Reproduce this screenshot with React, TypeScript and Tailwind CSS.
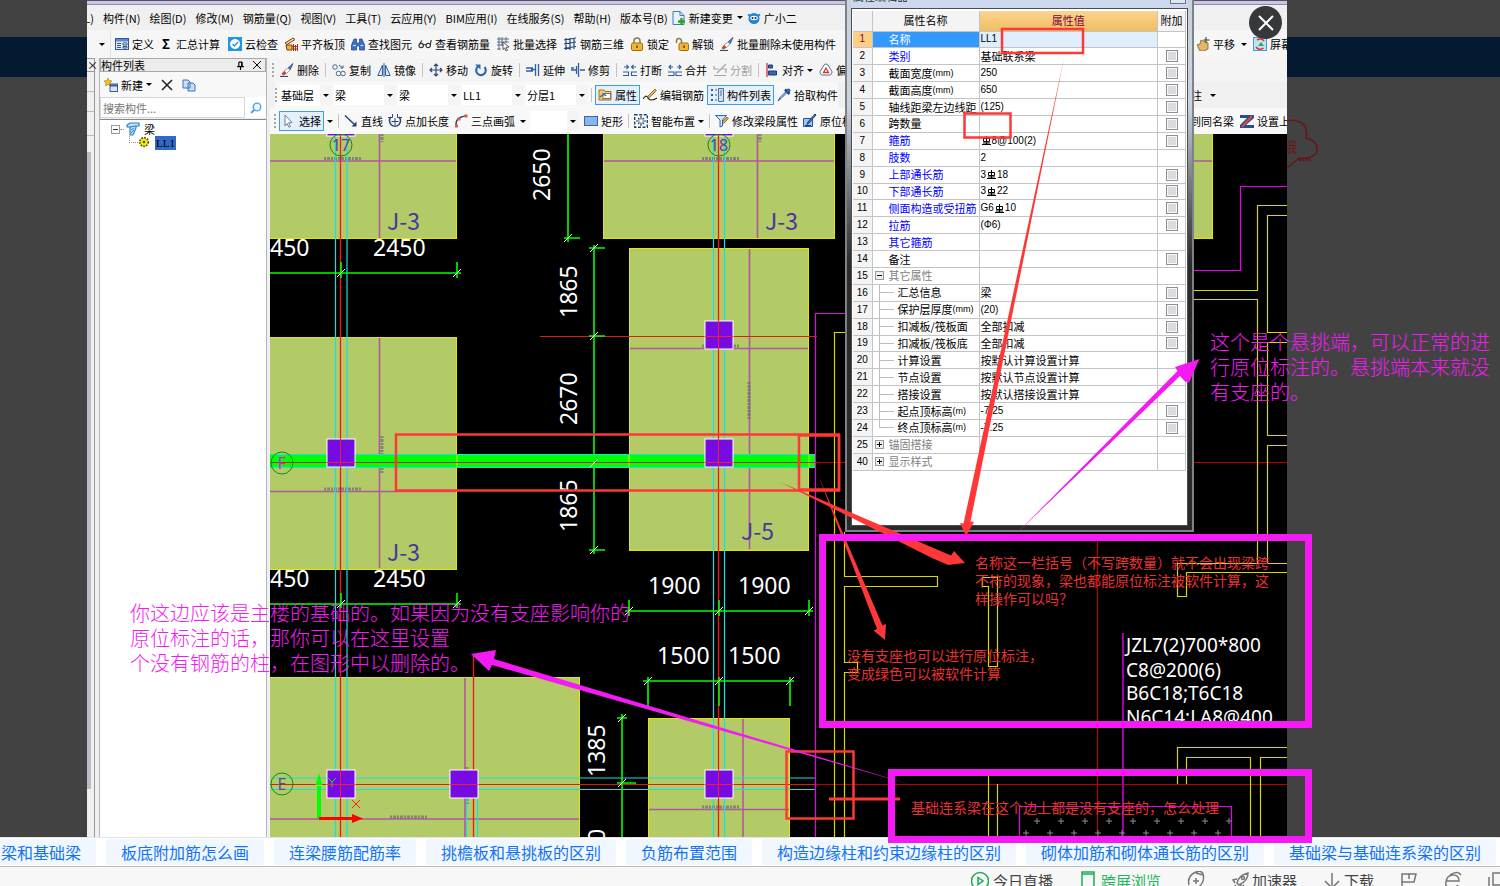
import React, { useState } from 'react';

/* ---------- small 14px toolbar icons ---------- */

const blue = '#2f5f9e';

const icons: Record<string, React.ReactNode> = {
  define: (
    <>
      <rect x="0.5" y="1.5" width="13" height="11" fill="#dfeafa" stroke="#33568c" />
      <rect x="1" y="2" width="12" height="2.5" fill="#5b8bd0" />
      <path d="M2 6.500h4M2 8.500h4M2 10.500h4M8 6h4v2H8zM8 9.500h4v1.500H8z" stroke="#33568c" fill="#fff" />
    </>
  ),
  cloudCheck: (
    <>
      <rect width="14" height="14" fill="#2196e3" />
      <path d="M7 2a5 5 0 1 0 .1 0z" fill="#fff" />
      <path d="M4.500 7l2 2 3.500-4" stroke="#2196e3" strokeWidth="1.400" fill="none" />
    </>
  ),
  alignSlab: (
    <>
      <path d="M1 6l8-5 2 1.500-8 5z" fill="#ffd991" stroke="#7a3f14" />
      <path d="M2 8h6v5H3z" fill="#f0b429" stroke="#7a3f14" />
      <path d="M9.500 7v7M11.500 8v6M13.500 7v7M8 9.500h6M8 12h6" stroke="#a8321c" />
    </>
  ),
  binoculars: (
    <>
      <path d="M3 2h2.500v4h3V2H11l2.500 6v5h-5V9h-3v4h-5V8z" fill="#3f72c4" stroke="#1d3f7d" strokeWidth=".7" />
      <path d="M2 8.500h3M9.500 8.500h3" stroke="#cfe1ff" />
    </>
  ),
  glasses: (
    <path d="M1 8.500a2.200 2.200 0 1 0 4.400 0 2.200 2.200 0 1 0-4.400 0M8 8.500a2.200 2.200 0 1 0 4.400 0 2.200 2.200 0 1 0-4.400 0M5.400 8q1.300-1 2.600 0M1.500 7L4 3.500M12.200 8l1-5" fill="none" stroke="#333" strokeWidth="1.200" />
  ),
  batchSelect: (
    <>
      <path d="M1 2h12M1 5h12M1 8h6M3 0v13M6 0v9M10 0v6M1 12h4" stroke="#5c6f8c" fill="none" />
      <path d="M7 5l6 5-3 .3 1.500 3-1.500.7-1.300-3L7 12.500z" fill="#fff" stroke="#333" strokeWidth=".8" />
    </>
  ),
  rebar3d: <path d="M1 3l12-2M1 7l12-2M1 11.500l12-2M3 1v12M7 1v12M11 1v11" stroke="#24477e" strokeWidth="1.200" fill="none" />,
  lock: (
    <>
      <path d="M4 6.500V4a3 3 0 0 1 6 0v2.500" fill="none" stroke="#8b7a4a" strokeWidth="1.500" />
      <rect x="1.500" y="6" width="11" height="7.500" rx="1.500" fill="#f2b635" stroke="#a06e0e" />
      <path d="M7 8.500v2.500" stroke="#5d3c00" strokeWidth="1.500" />
    </>
  ),
  unlock: (
    <>
      <path d="M1.500 6V4a2.500 2.500 0 0 1 5 0v2.500" fill="none" stroke="#8b7a4a" strokeWidth="1.500" />
      <rect x="4" y="6" width="9.500" height="7.500" rx="1.500" fill="#f2b635" stroke="#a06e0e" />
      <path d="M9 8.500v2.500" stroke="#5d3c00" strokeWidth="1.500" />
    </>
  ),
  brush: (
    <>
      <path d="M13 .5L8 5l2 2z" fill="#4a7fd0" stroke="#264a86" strokeWidth=".8" />
      <path d="M8 5L4 8l2.500 2.500L10 7z" fill="#fff" stroke="#888" strokeWidth=".8" />
      <path d="M4 8l-2.500 3 2 1.500L6.500 10.500z" fill="#d63b2b" />
      <path d="M0 13.500h8" stroke="#2b4a7a" strokeWidth="1.200" />
    </>
  ),
  copy2: (
    <g fill="#eef3fa" stroke="#516c92">
      <circle cx="3" cy="4" r="2.300" />
      <circle cx="6.500" cy="10.500" r="2.300" />
      <circle cx="11" cy="10.500" r="2.300" />
      <path d="M7 2l4 3M11 2.500V5H8.500" fill="none" stroke={blue} />
    </g>
  ),
  mirror: (
    <>
      <path d="M5.500 2v10.500H.8zM8.500 2v10.500h4.700z" fill="#dce8fa" stroke={blue} />
      <path d="M7 0v14" stroke={blue} />
    </>
  ),
  move: <path d="M7 1v12M1 7h12M5 3l2-2 2 2M5 11l2 2 2-2M3 5L1 7l2 2M11 5l2 2-2 2" fill="none" stroke="#2a4778" strokeWidth="1.200" />,
  rotate: (
    <>
      <path d="M4 3.500a4.800 4.800 0 1 0 6.500.5" fill="none" stroke="#2f66b8" strokeWidth="2.200" />
      <path d="M1 1.500h5.500v5z" fill="#2f66b8" />
    </>
  ),
  extend: <path d="M0 5h7M0 8h7M9.500 1v12M12.500 1v12M5 6.500h4" stroke={blue} strokeWidth="1.300" />,
  trim: <path d="M0 7h5M9 7h5M7.500 0v14M5.500 3v8M0 5h3" stroke={blue} strokeWidth="1.300" />,
  breakUp: <path d="M0 9h5.500v3.500H0M14 9H8.500v3.500H14M1 4h4M9 4h4M3.500 2l2 2-2 2M10.500 2l-2 2 2 2" stroke={blue} fill="none" strokeWidth="1.100" />,
  merge: <path d="M0 9h6v3.500H0M14 9H8v3.500h6M1 4h4M9 4h4M3 2L1 4l2 2M11 2l2 2-2 2" stroke={blue} fill="none" strokeWidth="1.100" />,
  split: <path d="M1 3v3h5M1 12.500h12M13 1L4 10M8 6h5v4" stroke="#a5a5a5" fill="none" strokeWidth="1.200" />,
  alignTo: (
    <>
      <path d="M2 0v14" stroke="#c5232b" strokeWidth="1.200" />
      <path d="M3.500 2h4v3h-4zM3.500 8h8v4h-8z" fill="#3467b3" stroke="#1e3f75" />
    </>
  ),
  offset: (
    <>
      <path d="M3 12a3 3 0 0 1-1-5l3-5a2.500 2.500 0 0 1 4 0l3 5a3 3 0 0 1-1 5z" fill="#fff" stroke="#54708f" />
      <path d="M4.500 9.500L7 5l2.500 4.500z" fill="#fff" stroke="#d0372c" strokeWidth="1.300" />
    </>
  ),
  props: (
    <>
      <path d="M1 2h5l1 1.500h6V12H1z" fill="#f9c867" stroke="#a37222" />
      <rect x="5" y="5.500" width="7.500" height="5" fill="#fff" stroke="#777" />
      <path d="M2 9l4-3 2 2" stroke="#3b6bb3" fill="none" strokeWidth="1.500" />
    </>
  ),
  editRebar: (
    <>
      <path d="M0 11q3-5 5-1t9 0" fill="none" stroke="#222" strokeWidth="1.200" />
      <path d="M5 8l7-7 1.500 1.500-7 7L4.500 10z" fill="#e8b04c" stroke="#6b4a14" strokeWidth=".7" />
    </>
  ),
  list: (
    <>
      <path d="M1 1h2v2H1zM1 6h2v2H1zM1 11h2v2H1z" fill={blue} />
      <path d="M5 2h2M5 7h2M5 12h2" stroke={blue} />
      <path d="M8.500.5h5v13h-5z" fill="#cfe0f7" stroke="#54708f" />
      <path d="M10 3h2M10 5h2M10 7h2" stroke="#54708f" />
    </>
  ),
  dropper: (
    <>
      <path d="M8 1.500l4.500 4.500" stroke="#1d4078" strokeWidth="2.500" />
      <path d="M9.500 5L4 10.500 1 13l2-3.500L8.500 4z" fill="#cfe5fb" stroke="#2b5596" />
      <circle cx="11.500" cy="2.500" r="2" fill="#2f66b8" />
    </>
  ),
  cursor: <path d="M3 1l7 7.500-3.500.3 2 3.700-1.500.8-2-3.800L3 12z" fill="#fff" stroke="#6d7f99" />,
  line: (
    <>
      <path d="M1 1.500L11 11" stroke="#1f3f77" strokeWidth="1.400" />
      <path d="M12.500 7.500v5h-5z" fill="#1f3f77" />
    </>
  ),
  pointLen: (
    <>
      <path d="M3 3a5.500 5.500 0 1 0 8 0" fill="none" stroke="#2a4778" strokeWidth="1.500" />
      <path d="M0 3.500h4.500V0M14 3.500H9.500V0" fill="none" stroke="#2a4778" />
      <path d="M7 4v7M3.500 7.500h7" stroke="#2a4778" />
    </>
  ),
  arc3: (
    <>
      <path d="M2 12q-1-9 10-10" fill="none" stroke="#2a4778" strokeWidth="1.300" />
      <path d="M1 10.500h3v3H1zM3.500 3.500h3v3h-3zM10.500.5h3v3h-3z" fill="#e05a48" />
    </>
  ),
  rect: <rect x=".5" y="2.500" width="13" height="9" fill="#8db4ef" stroke="#3665b5" />,
  smart: (
    <>
      <rect x=".7" y=".7" width="12.600" height="12.600" fill="#fff" stroke="#26436f" strokeWidth="1.400" strokeDasharray="3 1.500" />
      <path d="M7 2v3.500M7 8.500V12M2 7h3.500M8.500 7H12M4 4l1.500 1.500M10 4L8.500 5.500M4 10l1.500-1.500M10 10L8.500 8.500" stroke="#26436f" strokeWidth="1.200" />
    </>
  ),
  editSeg: (
    <>
      <path d="M.5 1.500h11l-4 4.500v6l-2.500 1V6z" fill="#cfe5fb" stroke="#2868b8" />
      <path d="M7 8l5-5 1.500 1.500-5 5z" fill="#e9a43c" stroke="#6b4a14" strokeWidth=".7" />
    </>
  ),
  inSitu: (
    <>
      <path d="M.5 4.500h9v8h-9z" fill="#9cc3f2" stroke="#2b5596" />
      <path d="M13 1L6 9l-2 1.500L5 8l7-8z" fill="#4a7fd0" stroke="#1d4078" />
      <path d="M2 11.500h6" stroke="#1d4078" />
    </>
  ),
  pan: (
    <>
      <path d="M1 8l3-1 1-4 2 1 5 2v6l-4 2H4z" fill="#e3b566" stroke="#7c5a1c" strokeWidth=".8" />
      <path d="M10 0v6M7.500 3h6" stroke="#333" />
    </>
  ),
  screenRot: (
    <>
      <rect x=".5" y=".5" width="13" height="13" fill="#bfe3f6" stroke="#4b9bc6" />
      <path d="M5 9l3-4 3 4z" fill="#49a04a" />
      <path d="M4 3a5 5 0 0 1 7 1M10.500 11a5 5 0 0 1-7.500-1" fill="none" stroke="#e0342a" strokeWidth="1.600" />
    </>
  ),
  setTop: (
    <>
      <path d="M0 1h14v3L6 11h8v3H0v-3l7-7H0z" fill="#23508f" />
      <path d="M2 13L12 2" stroke="#e04a3a" strokeWidth="2" />
    </>
  ),
  newChange: (
    <>
      <path d="M1 .5h7l4 4v9H1z" fill="#e8f3ff" stroke="#3f78bd" />
      <path d="M8 .5v4h4" fill="none" stroke="#3f78bd" />
      <path d="M9.500 7v7M6 10.500h7" stroke="#27a32b" strokeWidth="2.400" />
    </>
  ),
  mascot: (
    <>
      <path d="M1 3.500L3.500 5M13 3.500L10.500 5" stroke="#1a84d6" strokeWidth="2" />
      <circle cx="7" cy="7.500" r="5.500" fill="#1a84d6" />
      <ellipse cx="7" cy="7" rx="3.800" ry="2.200" fill="#fff" />
      <circle cx="5.500" cy="7" r="1" fill="#123" />
      <circle cx="8.500" cy="7" r="1" fill="#123" />
    </>
  ),
  newItem: (
    <>
      <path d="M4 0l1 2.500 3 .5-2 2 .5 3L4 6.500 1.500 8 2 5 0 3l3-.5z" fill="#f6c21c" stroke="#a67c00" strokeWidth=".6" />
      <rect x="6" y="6" width="7.500" height="7.500" fill="#d9e7fb" stroke="#2f5f9e" />
      <path d="M6 7.500h7.500" stroke="#2f5f9e" strokeWidth="2" />
    </>
  ),
  copyDoc: <path d="M1 2h5l2 2v6H1zM6 5h5l2 2v6H6z" fill="#c7defa" stroke="#4272b5" />,
  beam: (
    <>
      <path d="M1 3l3-2h9v3h-3v2L7 13H4V5H1z" fill="#bfe0fb" stroke="#2b82c9" strokeWidth="1.200" />
      <path d="M4 5l6-1M5 8l3-2M5 11l3-3" stroke="#2b82c9" />
    </>
  ),
  gear: (
    <>
      <circle cx="7" cy="7" r="5" fill="#f7ec13" stroke="#5d5500" strokeWidth="2" strokeDasharray="2 1.300" />
      <circle cx="7" cy="7" r="1.600" fill="#5d5500" />
    </>
  ),
};

function Icon({ name, size = 'size-[14px]' }: { name: string; size?: string }) {
  return (
    <svg viewBox="0 0 14 14" fill="none" className={`${size} shrink-0`} aria-hidden="true">
      {icons[name]}
    </svg>
  );
}

function Caret() {
  return <span aria-hidden="true" className="h-0 w-0 shrink-0 border-x-[3px] border-t-[3px] border-x-transparent border-t-black" />;
}

function Sep() {
  return <span aria-hidden="true" className="h-[14px] w-px shrink-0 bg-[#c4c4c4]" />;
}

function Grip() {
  return <span aria-hidden="true" className="h-[14px] w-0 shrink-0 border-l-2 border-dotted border-[#a8a8a8]" />;
}

type ToolProps = { icon?: string; label: string; active?: boolean; muted?: boolean; caret?: boolean };

function Tool({ icon, label, active, muted, caret }: ToolProps) {
  return (
    <button
      type="button"
      className={`flex shrink-0 items-center gap-[3px] whitespace-nowrap ${active ? 'h-5 border border-[#3c9cf0] bg-[#e4f0fb] px-[2px]' : ''} ${muted ? 'text-[#a0a0a0]' : 'text-black'}`}
    >
      {icon && <Icon name={icon} />}
      <span>{label}</span>
      {caret && <Caret />}
    </button>
  );
}

function Combo({ label, value, width }: { label: string; value: string; width: string }) {
  return (
    <div className={`relative flex h-5 shrink-0 items-center ${width}`}>
      <select aria-label={label} defaultValue={value} className="h-full w-full appearance-none bg-white pl-px text-[11px] outline-none">
        <option value={value}>{value}</option>
      </select>
      <span className="pointer-events-none absolute right-0 flex h-full w-3 items-center justify-center bg-[#f4f4f4]">
        <Caret />
      </span>
    </div>
  );
}

/* ---------- menu and toolbars ---------- */

const menus = ['构件(N)', '绘图(D)', '修改(M)', '钢筋量(Q)', '视图(V)', '工具(T)', '云应用(Y)', 'BIM应用(I)', '在线服务(S)', '帮助(H)', '版本号(B)'];

function MenuBar() {
  return (
    <nav className="flex h-[25px] items-center gap-1 overflow-hidden bg-[#f0f0f0]">
      <div className="flex shrink-0 items-center gap-[9px]">
        <span className="w-[7px] shrink-0 overflow-hidden">
          <span className="float-right">L)</span>
        </span>
        {menus.map((m) => (
          <button key={m} type="button" className="shrink-0 whitespace-nowrap">
            {m}
          </button>
        ))}
      </div>
      <Tool icon="newChange" label="新建变更" />
      <Caret />
      <Tool icon="mascot" label="广小二" />
    </nav>
  );
}

function MainToolbar() {
  return (
    <div className="flex h-7 items-center overflow-hidden bg-[#f6f6f6]">
      <div className="flex h-full w-6 shrink-0 items-center justify-end border-r border-[#e2e2e2] pr-[5px]">
        <Caret />
      </div>
      <div className="flex flex-1 items-center gap-[6px] overflow-hidden pl-1">
        <Tool icon="define" label="定义" />
        <button type="button" className="flex shrink-0 items-center gap-[6px] px-[2px]">
          <b className="text-[13px]">Σ</b>汇总计算
        </button>
        <Tool icon="cloudCheck" label="云检查" />
        <Tool icon="alignSlab" label="平齐板顶" />
        <Tool icon="binoculars" label="查找图元" />
        <Tool icon="glasses" label="查看钢筋量" />
        <Tool icon="batchSelect" label="批量选择" />
        <Tool icon="rebar3d" label="钢筋三维" />
        <Tool icon="lock" label="锁定" />
        <Tool icon="unlock" label="解锁" />
        <Tool icon="brush" label="批量删除未使用构件" />
      </div>
      <div className="flex w-[91px] shrink-0 items-center gap-[6px] overflow-hidden">
        <Tool icon="pan" label="平移" />
        <Caret />
        <Tool icon="screenRot" label="屏幕" />
      </div>
    </div>
  );
}

function EditToolbar() {
  return (
    <div className="flex h-6 items-center gap-[6px] overflow-hidden bg-[#f4f4f4] pl-[2px]">
      <Grip />
      <Tool icon="brush" label="删除" />
      <Sep />
      <Tool icon="copy2" label="复制" />
      <Tool icon="mirror" label="镜像" />
      <Sep />
      <Tool icon="move" label="移动" />
      <Tool icon="rotate" label="旋转" />
      <Sep />
      <Tool icon="extend" label="延伸" />
      <Tool icon="trim" label="修剪" />
      <Sep />
      <Tool icon="breakUp" label="打断" />
      <Tool icon="merge" label="合并" />
      <Tool icon="split" label="分割" muted />
      <Sep />
      <Tool icon="alignTo" label="对齐" caret />
      <Tool icon="offset" label="偏移" />
    </div>
  );
}

function LayerToolbar() {
  return (
    <div className="flex h-[26px] items-center justify-between overflow-hidden bg-[#f0f0f0] pl-[5px]">
      <div className="flex h-full items-center gap-[3px] bg-[#f8f8f8]">
        <Grip />
        <div className="flex items-center gap-[2px]">
          <Combo label="楼层" value="基础层" width="w-[52px]" />
          <Combo label="构件类型" value="梁" width="w-[62px]" />
          <Combo label="构件种类" value="梁" width="w-[62px]" />
          <Combo label="构件" value="LL1" width="w-[62px]" />
          <Combo label="分层" value="分层1" width="w-[62px]" />
        </div>
        <Sep />
        <Tool icon="props" label="属性" active />
        <Tool icon="editRebar" label="编辑钢筋" />
        <Tool icon="list" label="构件列表" active />
        <Tool icon="dropper" label="拾取构件" />
      </div>
      <div className="flex h-full w-[93px] shrink-0 items-center gap-2">
        <span className="w-2 overflow-hidden">
          <span className="float-right">注</span>
        </span>
        <Caret />
      </div>
    </div>
  );
}

function DrawToolbar() {
  return (
    <div className="flex h-[26px] items-center justify-between overflow-hidden bg-[#f8f8f8] pl-1">
      <div className="flex items-center gap-[5px]">
        <div className="flex items-center gap-[3px]">
          <Grip />
          <Tool icon="cursor" label="选择" active />
          <Caret />
        </div>
        <Sep />
        <Tool icon="line" label="直线" />
        <Tool icon="pointLen" label="点加长度" />
        <Tool icon="arc3" label="三点画弧" />
        <Caret />
        <Combo label="画弧方式" value="" width="w-[48px]" />
        <Tool icon="rect" label="矩形" />
        <Sep />
        <Tool icon="smart" label="智能布置" caret />
        <Sep />
        <Tool icon="editSeg" label="修改梁段属性" />
        <Tool icon="inSitu" label="原位标注" />
      </div>
      <div className="flex w-[94px] shrink-0 items-center gap-[6px] overflow-hidden">
        <span className="w-[41px] shrink-0 overflow-hidden">
          <span className="float-right whitespace-nowrap">到同名梁</span>
        </span>
        <Tool icon="setTop" label="设置上" />
      </div>
    </div>
  );
}

/* ---------- component list panel ---------- */

function ComponentPanel() {
  const [term, setTerm] = useState('');
  return (
    <aside className="flex w-[168px] shrink-0 flex-col border-x border-[#b4b4bc] bg-[#f0f0f0]">
      <header className="flex h-[14px] items-center border border-[#a8a8a8] bg-[#ececec] pr-1">
        <h2 className="flex-1 leading-3">构件列表</h2>
        <svg viewBox="0 0 8 8" className="mr-2 size-[9px]" aria-hidden="true">
          <path d="M2.500 1v4M5.500 1v4M2.500 1h3M1 5h6M4 5v3M5 1v4" stroke="#000" fill="none" />
        </svg>
        <svg viewBox="0 0 8 8" className="size-2" aria-hidden="true">
          <path d="M0 0l8 8M8 0L0 8" stroke="#000" />
        </svg>
      </header>
      <div className="flex h-[25px] items-center gap-[9px] bg-[#f8f8f8] pl-1">
        <Tool icon="newItem" label="新建" caret />
        <button type="button" aria-label="删除">
          <svg viewBox="0 0 12 12" className="size-3">
            <path d="M1 1l10 10M11 1L1 11" stroke="#222" strokeWidth="1.500" />
          </svg>
        </button>
        <button type="button" aria-label="复制">
          <Icon name="copyDoc" />
        </button>
      </div>
      <form className="flex h-[21px] items-center bg-white" onSubmit={(e) => e.preventDefault()}>
        <input
          type="text"
          aria-label="搜索构件"
          value={term}
          onChange={(e) => setTerm(e.target.value)}
          placeholder="搜索构件..."
          className="h-full w-[145px] border border-[#d5d5dd] bg-white px-[2px] outline-none placeholder:text-[#777]"
        />
        <button type="submit" aria-label="搜索" className="flex flex-1 justify-center">
          <svg viewBox="0 0 12 12" className="size-3">
            <circle cx="7" cy="5" r="3.800" fill="#eaf5fd" stroke="#4aa3e0" strokeWidth="1.300" />
            <path d="M4 8L1 11" stroke="#4aa3e0" strokeWidth="1.800" />
          </svg>
        </button>
      </form>
      <div className="mt-px flex-1 border-t border-[#828790] bg-white pt-[2px] pl-[11px]">
        <div className="flex h-[14px] items-center">
          <span className="flex size-[9px] items-center justify-center border border-[#999] bg-white">
            <span className="h-px w-[5px] bg-[#333]" />
          </span>
          <span className="mr-[2px] w-1 border-t border-dotted border-[#999]" />
          <Icon name="beam" />
          <span className="ml-1">梁</span>
        </div>
        <div className="flex h-[14px] items-start pl-[18px]">
          <span className="h-[7px] w-[9px] border-b border-l border-dotted border-[#999]" />
          <Icon name="gear" size="size-3" />
          <button type="button" className="ml-[5px] h-[14px] bg-[#316ac5] px-px font-['Liberation_Serif',serif] leading-[14px]">
            LL1
          </button>
        </div>
      </div>
    </aside>
  );
}

/* ---------- CAD drawing ---------- */

const pads = [
  [260, 120, 197, 118],
  [260, 337, 197, 232],
  [260, 677, 320, 180],
  [603, 120, 232, 118],
  [629, 248, 180, 302],
  [648, 718, 142, 140],
  [1180, 120, 33, 118],
];

const columns = [
  [327, 108],
  [705, 108],
  [327, 439],
  [705, 321],
  [705, 439],
  [327, 770],
  [450, 770],
  [705, 770],
];

const axisBubbles = [
  { x: 341, y: 145, t: '17', c: '#5a3fb0' },
  { x: 719, y: 145, t: '18', c: '#5a3fb0' },
  { x: 282, y: 463, t: 'F', c: '#e815e8' },
  { x: 282, y: 784, t: 'E', c: '#5a4a90' },
];

const horizontalDims = [
  { x: 270, y: 256, t: '450' },
  { x: 373, y: 256, t: '2450' },
  { x: 270, y: 587, t: '450' },
  { x: 373, y: 587, t: '2450' },
  { x: 648, y: 594, t: '1900' },
  { x: 738, y: 594, t: '1900' },
  { x: 657, y: 664, t: '1500' },
  { x: 728, y: 664, t: '1500' },
];

const verticalDims = [
  { x: 550, y: 201, t: '2650' },
  { x: 577, y: 318, t: '1865' },
  { x: 577, y: 425, t: '2670' },
  { x: 577, y: 532, t: '1865' },
  { x: 605, y: 777, t: '1385' },
  { x: 605, y: 842, t: '0' },
];

const ticks = [
  [341, 273], [457, 273], [341, 604], [457, 604], [568, 238], [594, 248], [594, 336], [594, 463], [594, 550],
  [629, 611], [719, 611], [809, 611], [648, 681], [719, 681], [790, 681], [622, 718], [622, 783],
];

const beamNotes = ['JZL7(2)700*800', 'C8@200(6)', 'B6C18;T6C18', 'N6C14;LA8@400'];
const beamNoteY = [652, 677, 700, 724];

function Drawing() {
  return (
    <svg viewBox="270 134 1017 703" className="h-[703px] w-[1017px] shrink-0 font-['Noto_Sans',sans-serif]" role="img" aria-label="基础平面图">
      <defs>
        <pattern id="hatch" width="8" height="8" patternUnits="userSpaceOnUse">
          <rect width="8" height="8" fill="#8000ff" />
          <path d="M0 0l8 8M8 0L0 8" stroke="#5b2d8c" strokeWidth="1" />
        </pattern>
      </defs>
      <rect x="270" y="134" width="1017" height="703" fill="#000" />

      {/* pad footings */}
      {pads.map(([x, y, w, h]) => (
        <rect key={`${x}-${y}`} x={x + 0.5} y={y + 0.5} width={w - 1} height={h} fill="#b2cb67" stroke="#e6e600" strokeWidth="1" />
      ))}
      <path
        d="M270 161H456M379.500 134V238M270 491.500H456M379.500 338V568M270 819H579M465 678V837M604 161H834M757.500 134V238M630 348.500H808M749.500 249V549M649 809.500H789M743 719V837M1190 161H1212"
        stroke="#b455a0"
        strokeWidth="1.600"
        fill="none"
      />
      <path
        d="M324 158.500h37M702 158.500h37M324 489h37M702 346h37M390 817h38M702 807h37M382 436v38M749 382v38M467 767v38M382 134v8M760 134v8"
        stroke="#6b6a78"
        strokeWidth="3"
        strokeDasharray="2 1 3 1"
        opacity=".7"
        fill="none"
      />

      {/* selected beam and axes */}
      <rect x="270" y="455" width="545" height="12" fill="#00ff00" />
      <path d="M457 455v12M629 455v12M809 455v12" stroke="#e6e600" />
      <path d="M335.500 134V837M347 134V837M713.500 134V837M724.500 134V837M270 454.500H815M270 467.500H815M270 778H815M270 789.500H815M466.500 798V837M477.500 798V837" stroke="#18e0e0" strokeWidth="1.200" fill="none" />
      <path d="M340.500 134V837M718.500 134V837M473.500 655V837" stroke="#ff1010" strokeWidth="1.300" fill="none" />
      <path d="M270 462.500H815M540 336.500H817M270 784.500H815" stroke="#d8200c" strokeWidth="1.200" fill="none" />
      <path d="M815 462.500H1287M815 784.500H1287M1097.500 540V837" stroke="#b40000" strokeWidth="1.200" fill="none" />
      {columns.map(([x, y]) => (
        <rect key={`${x}-${y}`} x={x} y={y} width="28" height="28" fill="url(#hatch)" stroke="#fff" strokeWidth="1" />
      ))}
      <path d="M340.500 134V165M340.500 437V469M718.500 134V165M718.500 318V352M718.500 437V469M718.500 768V800M340.500 768V800M327 462.500h28M705 462.500h28M705 336.500h28M327 784.500h28M450 784.500h28M705 784.500h28" stroke="#f0202a" fill="none" />

      {axisBubbles.map((b) => (
        <g key={b.t}>
          <circle cx={b.x} cy={b.y} r="11" fill="none" stroke="#118a11" />
          <text x={b.x} y={b.y + 6} textAnchor="middle" fontSize="16" fill={b.c}>
            {b.t}
          </text>
        </g>
      ))}
      <g fontSize="23" fill="#4b36a0" className="font-['Noto_Sans_CJK_SC',sans-serif]">
        <text x="387" y="230">J-3</text>
        <text x="387" y="561">J-3</text>
        <text x="765" y="230">J-3</text>
        <text x="741" y="540">J-5</text>
      </g>

      {/* dimensions */}
      <path
        d="M270 273H461M341 262V278M457 262V278M270 604H461M341 593V608M457 593V608M568 134V242M564 238H580M594 245V554M589 248H605M589 336H605M589 550H605M625 611H813M629 600V616M719 600V616M809 600V616M643 681H794M648 677V706M719 677V706M790 677V706M622 714V837M617 718H627M617 783H636"
        stroke="#00ff00"
        strokeWidth="1.600"
        fill="none"
      />
      {ticks.map(([x, y]) => (
        <path key={`${x}-${y}`} d={`M${x - 4} ${y + 4}l8 -8`} stroke="#fff" strokeWidth="1" />
      ))}
      <g fontSize="23" fill="#fff">
        {horizontalDims.map((d) => (
          <text key={`${d.x}-${d.y}`} x={d.x} y={d.y}>
            {d.t}
          </text>
        ))}
        {verticalDims.map((d) => (
          <text key={`${d.x}-${d.y}`} transform={`translate(${d.x} ${d.y}) rotate(-90)`}>
            {d.t}
          </text>
        ))}
      </g>

      {/* origin marker */}
      <path d="M319 818V786" stroke="#00ff00" strokeWidth="4" />
      <path d="M315.500 785l3.500-12 3.500 12z" fill="#00ff00" />
      <path d="M319 818.500H352" stroke="#ff0000" strokeWidth="3" />
      <path d="M352 814l11 4.500-11 4.500z" fill="#ff0000" />
      <path d="M352 800l8 8M360 800l-8 8" stroke="#ff2010" />
      <path d="M328 778l4 4 4-4M332 782v5" stroke="#40c040" fill="none" />

      {/* walls */}
      <path
        d="M845 332.500H834.500V837M844.500 532V576.500H937.500V586.500H844.500V662.500H857.500V672.500H844.500V837M982.500 577.500H997.500V666.500H988.500V586.500H982.500zM988.500 776V837M997.500 784V837M1287 205.500H1257.500V290.500H1190M1190 299.500H1257.500V563M1287 215.500H1267.500V332.500H1287M1287 342.500H1267.500V435.500H1287M1287 445.500H1267.500V563M1287 563.500H1177.500V596.500H1186.500V572.500H1287M1287 747.500H1177.500V784M1186.500 784V757.500H1250.500V837M1287 757.500H1260.500V837"
        stroke="#d6d600"
        strokeWidth="1.200"
        fill="none"
      />
      <path d="M845 313.500H815.500V837M1287 186.500H1240.500V270.500H1190M1019.500 837V806.500H1231.500V837" stroke="#e800e8" strokeWidth="1.200" fill="none" />
      <path d="M1123 633V837" stroke="#a000a8" strokeWidth="2" />
      <g stroke="#8c8c8c">
        {Array.from({ length: 9 }, (_, i) => (
          <path key={i} d={`M${1034 + i * 24} 821h6m-3 -3v6M${1023 + i * 24} 833h6m-3 -3v6`} />
        ))}
      </g>
      <g fontSize="19" fill="#fff">
        {beamNotes.map((t, i) => (
          <text key={t} x="1126" y={beamNoteY[i]}>
            {t}
          </text>
        ))}
      </g>
    </svg>
  );
}

/* ---------- property dialog ---------- */

type Row = { no: number; name: string; value?: string; kind?: 'link' | 'group' | 'child' | 'last'; check?: boolean; open?: boolean };

const rows: Row[] = [
  { no: 1, name: '名称', value: 'LL1' },
  { no: 2, name: '类别', value: '基础联系梁', kind: 'link', check: true },
  { no: 3, name: '截面宽度(mm)', value: '250', check: true },
  { no: 4, name: '截面高度(mm)', value: '650', check: true },
  { no: 5, name: '轴线距梁左边线距', value: '(125)', check: true },
  { no: 6, name: '跨数量', check: true },
  { no: 7, name: '箍筋', value: '#8@100(2)', kind: 'link', check: true },
  { no: 8, name: '肢数', value: '2', kind: 'link' },
  { no: 9, name: '上部通长筋', value: '3#18', kind: 'link', check: true },
  { no: 10, name: '下部通长筋', value: '3#22', kind: 'link', check: true },
  { no: 11, name: '侧面构造或受扭筋', value: 'G6#10', kind: 'link', check: true },
  { no: 12, name: '拉筋', value: '(Φ6)', kind: 'link', check: true },
  { no: 13, name: '其它箍筋', kind: 'link' },
  { no: 14, name: '备注', check: true },
  { no: 15, name: '其它属性', kind: 'group', open: true },
  { no: 16, name: '汇总信息', value: '梁', kind: 'child', check: true },
  { no: 17, name: '保护层厚度(mm)', value: '(20)', kind: 'child', check: true },
  { no: 18, name: '扣减板/筏板面', value: '全部扣减', kind: 'child', check: true },
  { no: 19, name: '扣减板/筏板底', value: '全部扣减', kind: 'child', check: true },
  { no: 20, name: '计算设置', value: '按默认计算设置计算', kind: 'child' },
  { no: 21, name: '节点设置', value: '按默认节点设置计算', kind: 'child' },
  { no: 22, name: '搭接设置', value: '按默认搭接设置计算', kind: 'child' },
  { no: 23, name: '起点顶标高(m)', value: '-7.25', kind: 'child', check: true },
  { no: 24, name: '终点顶标高(m)', value: '-7.25', kind: 'last', check: true },
  { no: 25, name: '锚固搭接', kind: 'group' },
  { no: 40, name: '显示样式', kind: 'group' },
];

// "#" stands for the rebar grade mark
function RebarValue({ text }: { text: string }) {
  const parts = text.split('#');
  return (
    <span className="flex items-center">
      {parts.map((p, i) => (
        <React.Fragment key={i}>
          {i > 0 && (
            <svg viewBox="0 0 9 9" className="mx-px size-[9px]" aria-label="三级钢">
              <path d="M4.500 0v9M1.500 2.500h6v3h-6zM0 8.500h9M1 7h7" stroke="#000" fill="none" />
            </svg>
          )}
          {p}
        </React.Fragment>
      ))}
    </span>
  );
}

function splitUnit(name: string) {
  const at = name.indexOf('(');
  return at < 0 ? [name, ''] : [name.slice(0, at), name.slice(at)];
}

function NameCell({ row }: { row: Row }) {
  const [label, unit] = splitUnit(row.name);
  const child = row.kind === 'child' || row.kind === 'last';
  return (
    <div className="flex h-[15px] items-center">
      <span className={`flex shrink-0 items-center ${child ? 'w-[25px]' : 'w-[16px]'} pl-[2px]`}>
        {row.kind === 'group' && (
          <button type="button" aria-label={row.open ? '折叠' : '展开'} className="relative size-[9px] border border-[#999] bg-[#eee]">
            <span className="absolute top-[3px] left-px h-px w-[5px] bg-black" />
            {!row.open && <span className="absolute top-px left-[3px] h-[5px] w-px bg-black" />}
          </button>
        )}
        {child && (
          <svg viewBox="0 0 20 17" className="h-[17px] w-5" aria-hidden="true">
            <path d={row.kind === 'last' ? 'M4.500 0V8.500H19' : 'M4.500 0V17M4.500 8.500H19'} stroke="#bdbdbd" fill="none" />
          </svg>
        )}
      </span>
      <span className="whitespace-nowrap">{label}</span>
      {unit && <span className="font-['Liberation_Sans',sans-serif] text-[9px]">{unit}</span>}
    </div>
  );
}

function PropertyDialog() {
  return (
    <section
      aria-label="属性编辑器"
      className="absolute top-0 left-[845px] flex h-[532px] w-[349px] flex-col border-x-2 border-b-2 border-[#7c8286] bg-linear-to-b from-[#c9d3de] from-20% to-[#2a2a2a] to-50% px-1 pb-1"
    >
      <div className="flex h-2 shrink-0 items-start justify-between overflow-hidden bg-[#cdd8ee] px-[2px]">
        <h2 className="-mt-3 text-[11px] leading-4 text-[#333]">属性编辑器</h2>
        <button type="button" aria-label="关闭属性编辑器" className="-mt-2 h-3 w-4 border border-[#6c7688] bg-[#dde5f0]" />
      </div>
      <div className="flex-1 overflow-hidden border border-[#4c4c4c] bg-white px-px pt-[2px]">
        <table className="h-[460px] w-full table-fixed border-collapse text-left text-[11px] leading-[15px]">
          <colgroup>
            <col className="w-[19px]" />
            <col className="w-[107px]" />
            <col />
            <col className="w-[28px]" />
          </colgroup>
          <thead>
            <tr className="h-5">
              <th className="border border-t-0 border-l-0 border-[#c4c4c4] bg-[#f2f2f2]" aria-label="序号" />
              <th className="border border-t-0 border-[#c4c4c4] bg-[#f4f4f4] p-0 text-center font-normal">属性名称</th>
              <th className="border border-t-0 border-[#c4c4c4] bg-linear-to-b from-[#fbd490] to-[#f0bd60] p-0 text-center font-normal text-[#800040]">属性值</th>
              <th className="border border-t-0 border-[#c4c4c4] bg-[#f4f4f4] p-0 text-center font-normal whitespace-nowrap">附加</th>
            </tr>
          </thead>
          <tbody>
            {rows.map((r) => {
              const sel = r.no === 1;
              const cjk = !!r.value && /[\u4e00-\u9fff]/.test(r.value);
              const tone = sel ? 'bg-[#3399ff] text-white' : r.kind === 'link' ? 'text-[#0000ff]' : r.kind === 'group' ? 'text-[#808080]' : 'text-black';
              return (
                <tr key={r.no}>
                  <td className={`border border-l-0 border-[#c4c4c4] p-0 text-center font-['Liberation_Sans',sans-serif] text-[10px] leading-3 ${sel ? 'bg-[#fdcf84] text-[#800040]' : 'bg-[#f4f4f4]'}`}>
                    {r.no}
                  </td>
                  <td className={`border border-[#c4c4c4] p-0 ${tone}`}>
                    <NameCell row={r} />
                  </td>
                  <td className={`border border-[#c4c4c4] py-0 pr-0 pl-px whitespace-nowrap ${sel ? 'bg-[#deeefd]' : ''} ${cjk ? '' : "font-['Liberation_Sans',sans-serif] text-[10px] leading-3"}`}>
                    {r.value && <RebarValue text={r.value} />}
                  </td>
                  <td className="border border-[#c4c4c4] p-0">
                    {r.check && (
                      <input
                        type="checkbox"
                        aria-label={`附加 ${r.name}`}
                        className="mx-auto block size-3 appearance-none border border-[#8e8f8f] bg-[#d8dbe0] outline-1 -outline-offset-2 outline-[#f8f8f8] checked:bg-[#3399ff]"
                      />
                    )}
                  </td>
                </tr>
              );
            })}
          </tbody>
        </table>
      </div>
    </section>
  );
}

/* ---------- markup drawn over the screenshot ---------- */

function Markup() {
  return (
    <div className="pointer-events-none absolute inset-0">
      <div className="absolute top-[553px] left-[975px] text-sm leading-[18px] whitespace-nowrap text-[#e83232]">
        <p>名称这一栏括号（不写跨数量）就不会出现梁跨</p>
        <p>不符的现象，梁也都能原位标注被软件计算，这</p>
        <p>样操作可以吗？</p>
      </div>
      <div className="absolute top-[646px] left-[847px] text-sm leading-[18px] whitespace-nowrap text-[#e83232]">
        <p>没有支座也可以进行原位标注，</p>
        <p>变成绿色可以被软件计算</p>
      </div>
      <p className="absolute top-[798px] left-[911px] text-sm leading-[18px] whitespace-nowrap text-[#e83232]">
        基础连系梁在这个边上都是没有支座的，怎么处理
      </p>
      <div className="absolute top-[600px] left-[130px] text-xl leading-[25px] font-light whitespace-nowrap text-[#f31af3]">
        <p>你这边应该是主楼的基础的。如果因为没有支座影响你的</p>
        <p>原位标注的话，那你可以在这里设置</p>
        <p>个没有钢筋的柱，在图形中以删除的。</p>
      </div>
      <div className="absolute top-[329px] left-[1210px] text-xl leading-[25px] font-light whitespace-nowrap text-[#f31af3]">
        <p>这个是个悬挑端，可以正常的进</p>
        <p>行原位标注的。悬挑端本来就没</p>
        <p>有支座的。</p>
      </div>
      <svg viewBox="0 0 1500 886" className="absolute top-0 left-0 h-[886px] w-[1500px]" aria-hidden="true">
        <g fill="none" stroke="#ff3737" strokeWidth="2.500">
          <rect x="1002" y="29" width="81" height="24" />
          <rect x="964.500" y="113.500" width="46" height="24" />
          <rect x="396" y="434.500" width="443" height="56" />
          <rect x="799" y="435.500" width="40" height="54" />
          <rect x="786.500" y="751.500" width="67" height="67" />
          <path d="M829 799H900" strokeWidth="3" />
        </g>
        <g fill="#ff3737">
          <path d="M1064.500 56L963.500 523.500l-3.500-.5 6 13 8-14-3.500-.5z" />
          <path d="M780 482l152 76 16 7 17-2-11-12-3 4.500z" />
          <path d="M818.500 476l58.500 153-3.500 1.500L885 640l1-16-3.500 1.500z" />
        </g>
        <g fill="#f31af3">
          <path d="M1015 535L1180 376l5 5.500 4 1 10.500-23.500-24.500 8 2.500 4z" />
          <path d="M912 785L494 659l2-9-25 4 18 17 3-6z" />
        </g>
        <g fill="none" stroke="#f31af3" strokeWidth="7">
          <rect x="822.500" y="537.500" width="486" height="187" />
          <rect x="891.500" y="772.500" width="417" height="67" />
        </g>
      </svg>
    </div>
  );
}

/* ---------- bottom bars ---------- */

const related = ['板底附加筋怎么画', '连梁腰筋配筋率', '挑檐板和悬挑板的区别', '负筋布置范围', '构造边缘柱和约束边缘柱的区别', '砌体加筋和砌体通长筋的区别', '基础梁与基础连系梁的区别'];

function RelatedLinks() {
  return (
    <nav className="flex h-[30px] items-center gap-[10px] overflow-hidden border-t border-b border-t-[#e4e4e4] border-b-[#bdbdbd] bg-white text-base text-[#1273f5]">
      <a href="#0" className="shrink-0 bg-[#f0f7ff] pr-[15px] pl-px leading-[26px]">
        梁和基础梁
      </a>
      {related.map((t, i) => (
        <a key={t} href={`#${i + 1}`} className="shrink-0 rounded-sm bg-[#f0f7ff] px-[15px] leading-[26px]">
          {t}
        </a>
      ))}
    </nav>
  );
}

function StatusIcon({ children, color = 'text-[#777]' }: { children: React.ReactNode; color?: string }) {
  return (
    <svg viewBox="0 0 18 20" fill="none" stroke="currentColor" strokeWidth="1.500" className={`h-5 w-[18px] shrink-0 ${color}`} aria-hidden="true">
      {children}
    </svg>
  );
}

function StatusBar() {
  return (
    <footer className="h-[19px] overflow-hidden bg-[#f7f7f7] text-[15px] text-[#444]">
      <div className="flex h-7 items-center justify-end gap-[26px] whitespace-nowrap">
        <button type="button" className="flex items-center gap-1">
          <StatusIcon color="text-[#1aad5a]">
            <circle cx="9" cy="10" r="8.500" />
            <path d="M7 6.500l5 3.500-5 3.500z" />
          </StatusIcon>
          今日直播
        </button>
        <button type="button" className="flex items-center gap-1 text-[#1fb65f]">
          <StatusIcon color="text-[#1aad5a]">
            <path d="M3 1h12v18H3zM3 3h12" />
          </StatusIcon>
          跨屏浏览
        </button>
        <button type="button" aria-label="鼠标手势">
          <StatusIcon>
            <path d="M2 14q-2-8 5-12t9 1q2 7-3 12t-10 2M9 7v6M6 10h6M9 2l7 2" />
          </StatusIcon>
        </button>
        <button type="button" className="flex items-center gap-[3px]">
          <StatusIcon>
            <path d="M6 12q2-8 11-10 0 8-9 12zM6 8L2 9l2 3M10 13l-1 4 4-3M5 14l-3 3" />
            <circle cx="12" cy="7" r="1.500" />
          </StatusIcon>
          加速器
        </button>
        <button type="button" className="flex items-center gap-[3px]">
          <StatusIcon>
            <path d="M9 2v15M2 10l7 7 7-7" />
          </StatusIcon>
          下载
        </button>
        <button type="button" aria-label="标记">
          <StatusIcon>
            <path d="M2 18V3h14l-2 8H2M9 3v5" />
          </StatusIcon>
        </button>
        <button type="button" aria-label="浏览器模式">
          <StatusIcon>
            <path d="M2 10h13q0-6-6-6t-7 7 6 6q4 0 6-3M6 4q8-5 11 0" />
          </StatusIcon>
        </button>
        <button type="button" aria-label="窗口" className="-mr-[6px]">
          <StatusIcon>
            <path d="M5 2h12v12H5zM1 6v12h12" />
          </StatusIcon>
        </button>
      </div>
    </footer>
  );
}

export default function App() {
  const [open, setOpen] = useState(true);

  return (
    <div className="relative flex h-screen flex-col overflow-hidden bg-[#424242] font-['Noto_Sans_CJK_SC',sans-serif]">
      {/* dimmed page behind the viewer */}
      <div className="absolute inset-x-0 top-[37px] h-10 bg-[#041a31]" />
      <div className="absolute top-[118px] left-[1277px] text-[#6b1414]">
        <svg viewBox="0 0 42 52" className="h-[52px] w-[42px]" fill="none" stroke="currentColor" strokeWidth="1.500" aria-hidden="true">
          <path d="M0 10Q8 0 20 3t9 17q12 3 11 12t-18 8L10 50" />
          <path d="M22 42l12-1" strokeWidth="3" strokeDasharray="2 1" />
        </svg>
        <span className="absolute top-[18px] left-[6px] text-sm">哦</span>
      </div>

      {open && (
        <main className="relative mr-[213px] ml-[87px] flex flex-1 flex-col overflow-hidden bg-[#f0f0f0] text-[11px] leading-4 text-black">
          <div className="h-[5px] shrink-0 border-t border-b border-t-[#555] border-b-[#8f88a8] bg-[#cbc5e6]" />
          <MenuBar />
          <MainToolbar />
          <div className="flex flex-1 overflow-hidden">
            <div className="mr-1 flex w-2 shrink-0 flex-col border-r border-[#999]">
              <div className="h-[14px] border-t border-b border-[#999] leading-3">×</div>
              <div className="h-5 border-b border-[#bbb]" />
              <div className="h-5 border-b border-[#bbb]" />
              <div className="h-6 border-b border-[#bbb]" />
              <div className="mt-4 mr-[3px] flex-1 bg-[#bcbcc2]" />
              <div className="h-12" />
            </div>
            <ComponentPanel />
            <div className="ml-[3px] flex min-w-0 flex-1 flex-col">
              <EditToolbar />
              <LayerToolbar />
              <DrawToolbar />
              <div className="flex-1 overflow-hidden bg-black">
                <Drawing />
              </div>
            </div>
          </div>
        </main>
      )}
      {!open && <div className="flex-1" />}

      {open && <PropertyDialog />}
      <RelatedLinks />
      <StatusBar />
      {open && <Markup />}

      <button
        type="button"
        aria-label="关闭"
        onClick={() => setOpen(false)}
        className="absolute top-[6px] left-[1249px] flex size-[33px] items-center justify-center rounded-full bg-[#363839]"
      >
        <svg viewBox="0 0 16 16" className="size-4" stroke="#fff" strokeWidth="2">
          <path d="M1 1l14 14M15 1L1 15" />
        </svg>
      </button>
    </div>
  );
}
